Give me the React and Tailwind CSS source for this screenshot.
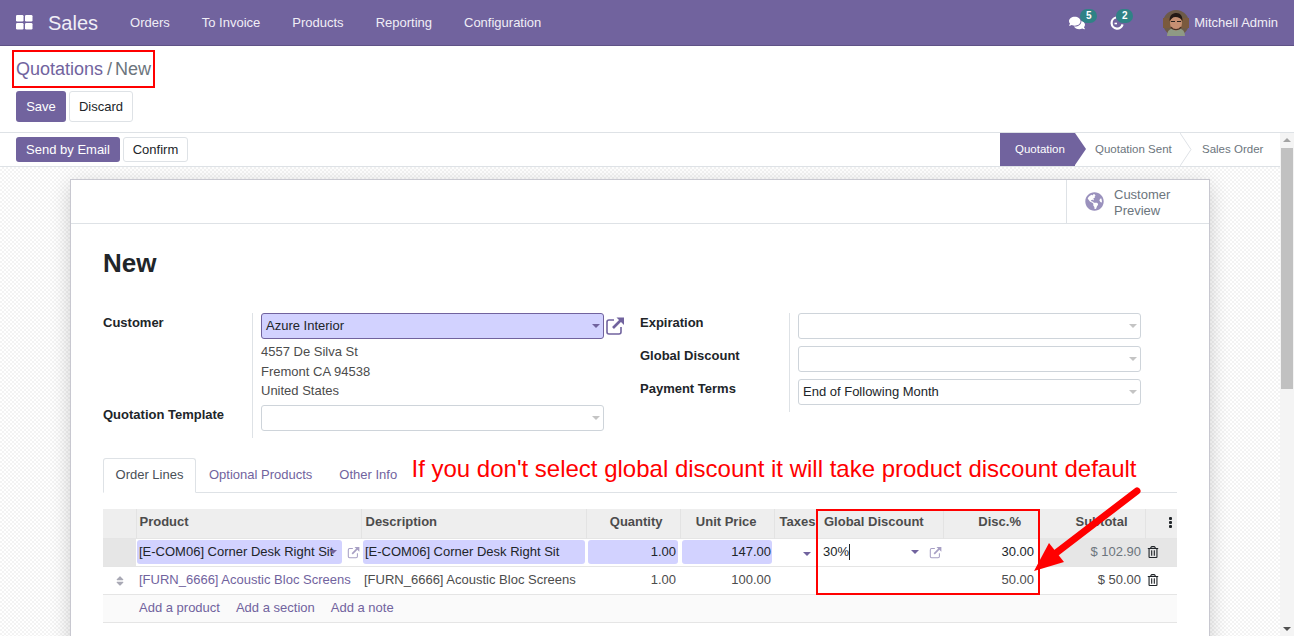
import { FaComments, FaGlobeAmericas, FaRegTrashAlt, FaSort } from 'react-icons/fa'

const FONT = { fontFamily: '"Liberation Sans", Arial, sans-serif' }

function ExternalLink({ size = 12, className = '' }) {
  return (
    <svg width={size} height={size} viewBox="0 0 20 20" className={`shrink-0 ${className}`} fill="none" stroke="currentColor">
      <path d="M9 4H4a2 2 0 0 0-2 2v10a2 2 0 0 0 2 2h10a2 2 0 0 0 2-2v-5" strokeWidth="1.6" />
      <path d="M8 12 17 3" strokeWidth="2.6" />
      <path d="M11.5 1.5H19V9z" fill="currentColor" stroke="none" />
    </svg>
  )
}

function Caret({ className = 'border-t-[#b5b5b5]' }) {
  return <span className={`inline-block w-0 h-0 border-x-[4px] border-x-transparent border-t-[4px] ${className}`} />
}

function Select({ value, active }) {
  return (
    <div
      className={`h-[26px] rounded-[3px] border flex items-center justify-between pl-[4px] pr-[3px] text-[#212529] ${
        active ? 'bg-[#d2d2ff] border-[#71639e]' : 'bg-white border-[#ced4da]'
      }`}
    >
      <span>{value}</span>
      <Caret className={active ? 'border-t-[#71639e]' : 'border-t-[#c4c4c4]'} />
    </div>
  )
}

function Navbar() {
  return (
    <header className="h-[46px] shrink-0 bg-[#71639e] border-b border-[#5f5286] flex items-center text-[#f0eef6]">
      <svg width="17" height="15" viewBox="0 0 17 15" className="ml-[16px]" fill="white">
        <rect x="0" y="0" width="7.5" height="6.5" rx="1.2" />
        <rect x="9" y="0" width="7.5" height="6.5" rx="1.2" />
        <rect x="0" y="8" width="7.5" height="6.5" rx="1.2" />
        <rect x="9" y="8" width="7.5" height="6.5" rx="1.2" />
      </svg>
      <span className="ml-[15px] text-[20px] leading-none">Sales</span>
      <nav className="ml-[32px] flex gap-[32px] text-[13px]">
        <span>Orders</span>
        <span>To Invoice</span>
        <span>Products</span>
        <span>Reporting</span>
        <span>Configuration</span>
      </nav>
      <div className="ml-auto flex items-center pr-[16px] text-[13px]">
        <div className="relative mr-[25px]">
          <FaComments size={16} className="text-white" />
          <span className="absolute -top-[6px] left-[11px] w-[17px] h-[14px] rounded-full bg-[#2f8286] text-white text-[10px] font-bold flex items-center justify-center">5</span>
        </div>
        <div className="relative mr-[39px]">
          <svg width="14" height="14" viewBox="0 0 14 14" fill="none" stroke="white" strokeWidth="2.2">
            <path d="M6 1.5A5.6 5.6 0 1 0 12.6 8.4" />
            <path d="M4.5 7.5H7" strokeWidth="1.6" />
          </svg>
          <span className="absolute -top-[7px] left-[6px] w-[17px] h-[14px] rounded-full bg-[#2f8286] text-white text-[10px] font-bold flex items-center justify-center">2</span>
        </div>
        <svg width="26" height="26" viewBox="0 0 26 26" className="mr-[5px]">
          <circle cx="13" cy="13" r="13" fill="#6d5a48" />
          <path d="M0 8h26v10H0z" fill="#7a5a3e" />
          <path d="M4 26c0-6 4-8 9-8s9 2 9 8z" fill="#8f9a85" />
          <ellipse cx="13" cy="13" rx="6" ry="7.5" fill="#c69073" />
          <path d="M6.5 11c0-6 3-8 7-8s6 3 6 8c-2-3-4-4-7-4s-4 2-6 4z" fill="#241a16" />
          <path d="M8 11.500h4M14 11.500h4" stroke="#2a2320" strokeWidth="1.2" />
          <path d="M8 17c2 3.500 8 3.500 10 0" stroke="#4a3327" strokeWidth="1.4" fill="none" />
        </svg>
        <span>Mitchell Admin</span>
      </div>
    </header>
  )
}

function ControlPanel() {
  return (
    <div className="h-[87px] shrink-0 bg-white border-b border-[#dee2e6] pl-[16px]">
      <div className="pt-[11px] h-[45px] text-[18px] leading-[24px]">
        <span className="text-[#71639e]">Quotations</span>
        <span className="text-[#6c757d] ml-[4px] mr-[3px]">/</span>
        <span className="text-[#6c757d]">New</span>
      </div>
      <div className="flex gap-[3px]">
        <button className="h-[31px] w-[50px] rounded-[3px] bg-[#71639e] text-white">Save</button>
        <button className="h-[31px] w-[64px] rounded-[3px] bg-white border border-[#dee2e6] text-[#212529]">Discard</button>
      </div>
    </div>
  )
}

function StatusBar() {
  return (
    <div className="h-[34px] shrink-0 bg-white border-b border-[#dee2e6] flex items-center pl-[16px]">
      <button className="h-[25px] w-[104px] rounded-[3px] bg-[#71639e] text-white">Send by Email</button>
      <button className="ml-[3px] h-[25px] w-[65px] rounded-[3px] bg-white border border-[#dee2e6] text-[#212529]">Confirm</button>
      <div className="ml-auto h-full flex text-[11.5px] text-[#6c757d]">
        <div className="relative w-[75px] bg-[#71639e] text-white flex items-center pl-[15px] whitespace-nowrap">
          Quotation
          <span className="absolute left-full top-0 h-0 w-0 border-y-[16.5px] border-y-transparent border-l-[11px] border-l-[#71639e]" />
        </div>
        <div className="relative w-[117px] pl-[20px] flex items-center whitespace-nowrap">
          Quotation Sent
          <svg width="12" height="33" viewBox="0 0 12 33" className="absolute right-0 top-0" fill="none" stroke="#dee2e6">
            <path d="M0 0 11 16.5 0 33" />
          </svg>
        </div>
        <div className="w-[88px] pl-[10px] flex items-center whitespace-nowrap">Sales Order</div>
      </div>
    </div>
  )
}

function FormGroups() {
  return (
    <div className="mt-[34px] flex text-[13px]">
      <div className="w-[537px] flex">
        <div className="w-[150px] border-r border-[#dee2e6] font-bold text-[#212529]">
          <div className="h-[92px] leading-[19px]">Customer</div>
          <div className="leading-[19px]">Quotation Template</div>
        </div>
        <div className="pl-[8px] h-[125px]">
          <div className="flex items-start">
            <div className="w-[343px]">
              <Select value="Azure Interior" active />
            </div>
            <ExternalLink size={20} className="ml-[1px] mt-[3px] text-[#71639e]" />
          </div>
          <div className="mt-[3px] leading-[19.5px] text-[#4c4c4c] h-[63px]">
            <div>4557 De Silva St</div>
            <div>Fremont CA 94538</div>
            <div>United States</div>
          </div>
          <div className="w-[343px]">
            <Select value="" />
          </div>
        </div>
      </div>
      <div className="flex">
        <div className="w-[150px] border-r border-[#dee2e6] font-bold text-[#212529] h-[99px]">
          <div className="h-[33px] leading-[19px]">Expiration</div>
          <div className="h-[33px] leading-[19px]">Global Discount</div>
          <div className="leading-[19px]">Payment Terms</div>
        </div>
        <div className="pl-[8px] w-[351px] flex flex-col gap-[7px]">
          <Select value="" />
          <Select value="" />
          <Select value="End of Following Month" />
        </div>
      </div>
    </div>
  )
}

function Tabs() {
  return (
    <div className="mt-[20px] h-[35px] border-b border-[#dee2e6] flex text-[13px]">
      <div className="h-[35px] w-[93px] pb-[2px] bg-white border border-[#dee2e6] border-b-white rounded-t-[3px] flex items-center justify-center text-[#495057]">Order Lines</div>
      <div className="pl-[13px] pr-[14px] flex items-center text-[#71639e]">Optional Products</div>
      <div className="px-[13px] flex items-center text-[#71639e]">Other Info</div>
    </div>
  )
}

const inputCell = 'h-[24px] rounded-[3px] bg-[#d2d2ff] flex items-center text-[#212529]'

function LinesTable() {
  return (
    <table className="mt-[16px] w-[1074px] table-fixed border-collapse text-[13px] text-[#4c4c4c]">
      <colgroup>
        <col className="w-[33px]" />
        <col className="w-[225px]" />
        <col className="w-[225px]" />
        <col className="w-[94px]" />
        <col className="w-[94px]" />
        <col className="w-[42px]" />
        <col className="w-[127px]" />
        <col className="w-[97px]" />
        <col className="w-[105px]" />
        <col className="w-[32px]" />
      </colgroup>
      <thead>
        <tr className="h-[29px] bg-[#eeeeee] font-bold text-[#4c4c4c]">
          <th className="border-r border-[#e3e3e3]" />
          <th className="border-r border-[#e3e3e3] text-left pl-[3px] pb-[3px]">Product</th>
          <th className="border-r border-[#e3e3e3] text-left pl-[4px] pb-[3px]">Description</th>
          <th className="border-r border-[#e3e3e3] text-right pr-[17px] pb-[3px]">Quantity</th>
          <th className="border-r border-[#e3e3e3] text-right pr-[17px] pb-[3px]">Unit Price</th>
          <th className="text-left pl-[5px] pb-[3px] whitespace-nowrap">Taxes</th>
          <th className="border-r border-[#e3e3e3] text-left pl-[8px] pb-[3px] whitespace-nowrap">Global Discount</th>
          <th className="text-right pr-[19px] pb-[3px]">Disc.%</th>
          <th className="border-r border-[#e3e3e3] text-right pr-[17px] pb-[3px]">Subtotal</th>
          <th className="text-left pl-[23px] pb-[3px] text-[#212529]">
            <span className="inline-flex flex-col gap-[1px] align-middle">
              <span className="w-[3px] h-[3px] bg-[#212529] rounded-[1px]" />
              <span className="w-[3px] h-[3px] bg-[#212529] rounded-[1px]" />
              <span className="w-[3px] h-[3px] bg-[#212529] rounded-[1px]" />
            </span>
          </th>
        </tr>
      </thead>
      <tbody>
        <tr className="h-[28px] border-y border-[#e5e5e5]">
          <td className="bg-[#e6e6e6]" />
          <td className="px-[1px]">
            <div className="flex items-center">
              <div className={`${inputCell} w-[205px] pl-[2px] relative overflow-hidden whitespace-nowrap`}>
                [E-COM06] Corner Desk Right Sit
                <span className="absolute right-[5px] top-0 h-full flex items-center"><Caret className="border-t-[#71639e]" /></span>
              </div>
              <ExternalLink size={13} className="ml-[5px] text-[#a79fc4]" />
            </div>
          </td>
          <td className="pl-[2px] pr-[1px]">
            <div className={`${inputCell} pl-[2px] whitespace-nowrap overflow-hidden`}>[E-COM06] Corner Desk Right Sit</div>
          </td>
          <td className="pl-[2px] pr-[2px]">
            <div className={`${inputCell} justify-end pr-[2px]`}>1.00</div>
          </td>
          <td className="pl-[2px] pr-[2px]">
            <div className={`${inputCell} justify-end pr-[1px]`}>147.00</div>
          </td>
          <td className="text-right pr-[5px]"><Caret className="border-t-[#71639e]" /></td>
          <td className="pl-[7px] text-[#212529]">
            <div className="flex items-center">
              <span className="border-r border-[#212529] leading-[16px]">30%</span>
              <span className="ml-[61px] flex items-center"><Caret className="border-t-[#71639e]" /></span>
              <ExternalLink size={13} className="ml-[10px] text-[#a79fc4]" />
            </div>
          </td>
          <td className="text-right pr-[6px] text-[#212529]">30.00</td>
          <td className="bg-[#e6e6e6] text-right pr-[4px] text-[#6c757d]">$ 102.90</td>
          <td className="bg-[#e6e6e6] pl-[2px] text-[#212529]"><FaRegTrashAlt size={12} /></td>
        </tr>
        <tr className="h-[28px] border-b border-[#e5e5e5]">
          <td className="text-center"><FaSort size={12} className="inline text-[#a9a9b5]" /></td>
          <td className="pl-[3px] text-[#71639e] whitespace-nowrap">[FURN_6666] Acoustic Bloc Screens</td>
          <td className="pl-[3px] whitespace-nowrap">[FURN_6666] Acoustic Bloc Screens</td>
          <td className="text-right pr-[4px]">1.00</td>
          <td className="text-right pr-[3px]">100.00</td>
          <td />
          <td />
          <td className="text-right pr-[6px]">50.00</td>
          <td className="text-right pr-[4px]">$ 50.00</td>
          <td className="pl-[2px] text-[#212529]"><FaRegTrashAlt size={12} /></td>
        </tr>
        <tr className="h-[28px] bg-[#fafafa] border-b border-[#e5e5e5]">
          <td />
          <td colSpan={9} className="pl-[3px] text-[#71639e]">
            <span className="mr-[16px]">Add a product</span>
            <span className="mr-[16px]">Add a section</span>
            <span>Add a note</span>
          </td>
        </tr>
      </tbody>
    </table>
  )
}

function Sheet() {
  return (
    <div className="mx-auto mt-[12px] w-[1140px] h-[700px] bg-white border border-[#c8c8d0] shadow-[0_5px_20px_-1px_rgba(0,0,0,0.2)]">
      <div className="h-[44px] border-b border-[#dee2e6] flex justify-end">
        <div className="w-[143px] border-l border-[#dee2e6] flex items-center pl-[18px]">
          <FaGlobeAmericas size={19} className="text-[#9a91bd]" />
          <div className="ml-[10px] pt-[2px] text-[13px] leading-[16px] text-[#6c757d]">Customer<br />Preview</div>
        </div>
      </div>
      <div className="px-[32px]">
        <h1 className="mt-[24px] text-[26px] leading-[31px] font-bold text-[#212529]">New</h1>
        <FormGroups />
        <Tabs />
        <LinesTable />
      </div>
    </div>
  )
}

function Scrollbar() {
  return (
    <div className="w-[14px] shrink-0 bg-[#f4f4f4] flex flex-col items-center justify-between py-[5px] relative">
      <span className="w-0 h-0 border-x-[4px] border-x-transparent border-b-[4px] border-b-[#a3a3a3]" />
      <span className="absolute top-[15px] left-[1px] right-[1px] h-[241px] bg-[#c1c1c1]" />
      <span className="w-0 h-0 border-x-[4px] border-x-transparent border-t-[4px] border-t-[#505050]" />
    </div>
  )
}

function Annotations() {
  return (
    <>
      <div className="absolute left-[12px] top-[50px] w-[143px] h-[38px] border-2 border-[#f00]" />
      <div className="absolute left-[816px] top-[509px] w-[224px] h-[86px] border-2 border-[#f00]" />
      <div className="absolute left-[411.5px] top-[455px] text-[24px] leading-[28px] text-[#f00] whitespace-nowrap">
        If you don't select global discount it will take product discount default
      </div>
      <svg width="1294" height="636" className="absolute left-0 top-0 pointer-events-none">
        <path d="M1137 491 1056 553" stroke="#f00" strokeWidth="7" strokeLinecap="round" />
        <path d="M1034 571 1049 543 1064 562z" fill="#f00" />
      </svg>
    </>
  )
}

export default function App() {
  return (
    <div className="relative h-screen flex flex-col overflow-hidden bg-white text-[13px]" style={FONT}>
      <Navbar />
      <ControlPanel />
      <div className="flex-1 min-h-0 flex">
        <div className="flex-1 min-w-0 flex flex-col">
          <StatusBar />
          <div className="flex-1 min-h-0 overflow-hidden bg-[repeating-conic-gradient(#f3f3f3_0_25%,#ffffff_0_50%)] bg-[length:4px_4px]">
            <Sheet />
          </div>
        </div>
        <Scrollbar />
      </div>
      <Annotations />
    </div>
  )
}
